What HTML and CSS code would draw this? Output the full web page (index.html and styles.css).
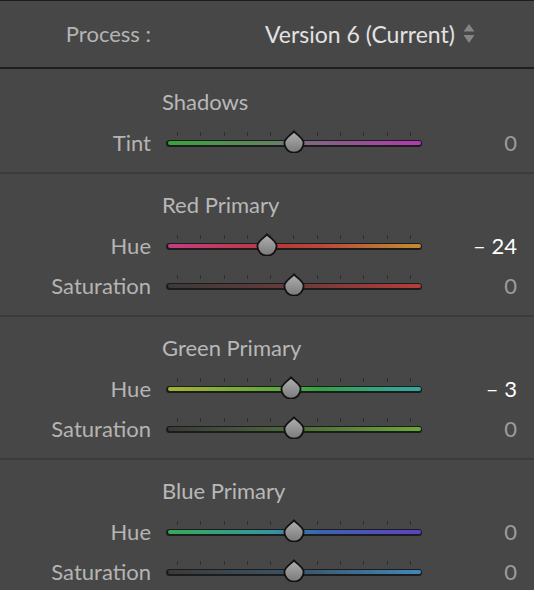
FILE: index.html
```html
<!DOCTYPE html>
<html>
<head>
<meta charset="utf-8">
<link rel="stylesheet" href="styles.css">
</head>
<body>
<div class="panel">
  <div class="header">
    <div class="h-label">Process :</div>
    <div class="h-value">Version 6 (Current)
      <svg class="updown" width="12" height="19" viewBox="0 0 12 19"><path d="M6 0 L11.5 7.5 H0.5 Z M6 19 L11.5 11 H0.5 Z" fill="#858585"/></svg>
    </div>
  </div>

  <div class="section first">
    <div class="title">Shadows</div>
    <div class="row">
      <div class="label">Tint</div>
      <div class="slider"><div class="ticks"><i></i><i></i><i></i><i></i><i></i><i></i><i></i><i></i><i></i><i></i><i></i></div><div class="track"><div class="fill g-tint"></div><svg class="thumb" style="left:50%" width="22" height="23" viewBox="0 0 22 23"><defs><linearGradient id="tg" x1="0" y1="0" x2="0" y2="1"><stop offset="0" stop-color="#b0b0b0"/><stop offset="1" stop-color="#7a7a7a"/></linearGradient></defs><path d="M11 1.3 C12.6 4.2 20.6 7.6 20.6 13 A9.6 9.6 0 0 1 1.4 13 C1.4 7.6 9.4 4.2 11 1.3 Z" fill="url(#tg)" stroke="#111" stroke-width="1.8" stroke-linejoin="round"/></svg></div></div>
      <div class="value">0</div>
    </div>
  </div>

  <div class="section">
    <div class="title">Red Primary</div>
    <div class="row">
      <div class="label">Hue</div>
      <div class="slider"><div class="ticks"><i></i><i></i><i></i><i></i><i></i><i></i><i></i><i></i><i></i><i></i><i></i></div><div class="track"><div class="fill g-red-hue"></div><svg class="thumb" style="left:39.5%" width="22" height="23" viewBox="0 0 22 23"><path d="M11 1.3 C12.6 4.2 20.6 7.6 20.6 13 A9.6 9.6 0 0 1 1.4 13 C1.4 7.6 9.4 4.2 11 1.3 Z" fill="url(#tg)" stroke="#111" stroke-width="1.8" stroke-linejoin="round"/></svg></div></div>
      <div class="value active">– 24</div>
    </div>
    <div class="row">
      <div class="label">Saturation</div>
      <div class="slider"><div class="ticks"><i></i><i></i><i></i><i></i><i></i><i></i><i></i><i></i><i></i><i></i><i></i></div><div class="track"><div class="fill g-red-sat"></div><svg class="thumb" style="left:50%" width="22" height="23" viewBox="0 0 22 23"><path d="M11 1.3 C12.6 4.2 20.6 7.6 20.6 13 A9.6 9.6 0 0 1 1.4 13 C1.4 7.6 9.4 4.2 11 1.3 Z" fill="url(#tg)" stroke="#111" stroke-width="1.8" stroke-linejoin="round"/></svg></div></div>
      <div class="value">0</div>
    </div>
  </div>

  <div class="section">
    <div class="title">Green Primary</div>
    <div class="row">
      <div class="label">Hue</div>
      <div class="slider"><div class="ticks"><i></i><i></i><i></i><i></i><i></i><i></i><i></i><i></i><i></i><i></i><i></i></div><div class="track"><div class="fill g-green-hue"></div><svg class="thumb" style="left:48.7%" width="22" height="23" viewBox="0 0 22 23"><path d="M11 1.3 C12.6 4.2 20.6 7.6 20.6 13 A9.6 9.6 0 0 1 1.4 13 C1.4 7.6 9.4 4.2 11 1.3 Z" fill="url(#tg)" stroke="#111" stroke-width="1.8" stroke-linejoin="round"/></svg></div></div>
      <div class="value active">– 3</div>
    </div>
    <div class="row">
      <div class="label">Saturation</div>
      <div class="slider"><div class="ticks"><i></i><i></i><i></i><i></i><i></i><i></i><i></i><i></i><i></i><i></i><i></i></div><div class="track"><div class="fill g-green-sat"></div><svg class="thumb" style="left:50%" width="22" height="23" viewBox="0 0 22 23"><path d="M11 1.3 C12.6 4.2 20.6 7.6 20.6 13 A9.6 9.6 0 0 1 1.4 13 C1.4 7.6 9.4 4.2 11 1.3 Z" fill="url(#tg)" stroke="#111" stroke-width="1.8" stroke-linejoin="round"/></svg></div></div>
      <div class="value">0</div>
    </div>
  </div>

  <div class="section">
    <div class="title">Blue Primary</div>
    <div class="row">
      <div class="label">Hue</div>
      <div class="slider"><div class="ticks"><i></i><i></i><i></i><i></i><i></i><i></i><i></i><i></i><i></i><i></i><i></i></div><div class="track"><div class="fill g-blue-hue"></div><svg class="thumb" style="left:50%" width="22" height="23" viewBox="0 0 22 23"><path d="M11 1.3 C12.6 4.2 20.6 7.6 20.6 13 A9.6 9.6 0 0 1 1.4 13 C1.4 7.6 9.4 4.2 11 1.3 Z" fill="url(#tg)" stroke="#111" stroke-width="1.8" stroke-linejoin="round"/></svg></div></div>
      <div class="value">0</div>
    </div>
    <div class="row">
      <div class="label">Saturation</div>
      <div class="slider"><div class="ticks"><i></i><i></i><i></i><i></i><i></i><i></i><i></i><i></i><i></i><i></i><i></i></div><div class="track"><div class="fill g-blue-sat"></div><svg class="thumb" style="left:50%" width="22" height="23" viewBox="0 0 22 23"><path d="M11 1.3 C12.6 4.2 20.6 7.6 20.6 13 A9.6 9.6 0 0 1 1.4 13 C1.4 7.6 9.4 4.2 11 1.3 Z" fill="url(#tg)" stroke="#111" stroke-width="1.8" stroke-linejoin="round"/></svg></div></div>
      <div class="value">0</div>
    </div>
  </div>
</div>
</body>
</html>
```

FILE: styles.css
```css
html, body {
  margin: 0;
  padding: 0;
  background: #474747;
}
body {
  font-family: Lato, "Open Sans", sans-serif;
  font-size: 22px;
  line-height: 26px;
  color: #b4b4b4;
  overflow: hidden;
}
.panel {
  width: 534px;
  border-top: 1px solid #1c1c1c;
}
.header {
  height: 66px;
  display: flex;
  align-items: center;
  border-bottom: 2px solid #1e1e1e;
}
.h-label {
  width: 151px;
  text-align: right;
  color: #b4b4b4;
}
.h-value {
  margin-left: 114px;
  font-size: 23px;
  color: #e2e2e2;
  display: flex;
  align-items: center;
  gap: 8px;
}
.updown {
  display: block;
  margin-top: -1px;
}
.section {
  padding: 18px 0 9px;
  border-bottom: 2px solid #3b3b3b;
}
.section.first {
  padding-top: 20px;
}
.title {
  padding-left: 162px;
  color: #b8b8b8;
  margin-bottom: 8px;
}
.row {
  height: 40px;
  display: grid;
  grid-template-columns: 151px 256px 1fr;
  column-gap: 15px;
  align-items: center;
}
.label {
  text-align: right;
  color: #b4b4b4;
}
.value {
  text-align: right;
  padding-right: 17px;
  color: #9c9c9c;
}
.value.active {
  color: #ffffff;
}
.slider {
  padding-bottom: 8px;
}
.ticks {
  height: 4px;
  margin-bottom: 4px;
  padding: 0 11px 0 11px;
  display: flex;
  justify-content: space-between;
}
.ticks i {
  width: 1px;
  height: 4px;
  background: #2e2e2e;
}
.track {
  position: relative;
  height: 7px;
  border-radius: 4px;
  background: #1c1c1c;
  padding: 1.5px;
  box-sizing: border-box;
}
.fill {
  height: 4px;
  border-radius: 2px;
}
.thumb {
  position: absolute;
  top: -9.5px;
  transform: translateX(-50%);
  display: block;
}
.g-tint { background: linear-gradient(to right, #3aa43a, #6a7c6a 48%, #7a6a7a 52%, #b238b2); }
.g-red-hue { background: linear-gradient(to right, #c33c82, #b83a3a 45%, #b8483a 60%, #c38c30); }
.g-red-sat { background: linear-gradient(to right, #3a3a3a, #6a3a3a 50%, #b83c3c); }
.g-green-hue { background: linear-gradient(to right, #a6b232, #5aa83a 45%, #32a246 60%, #32a8a8); }
.g-green-sat { background: linear-gradient(to right, #3a3a3a, #4c6a3a 50%, #6aaa38); }
.g-blue-hue { background: linear-gradient(to right, #36aa58, #3496a0 40%, #3a64b2 60%, #6040c2); }
.g-blue-sat { background: linear-gradient(to right, #3a3a3a, #3a5468 50%, #4088ba); }
```
